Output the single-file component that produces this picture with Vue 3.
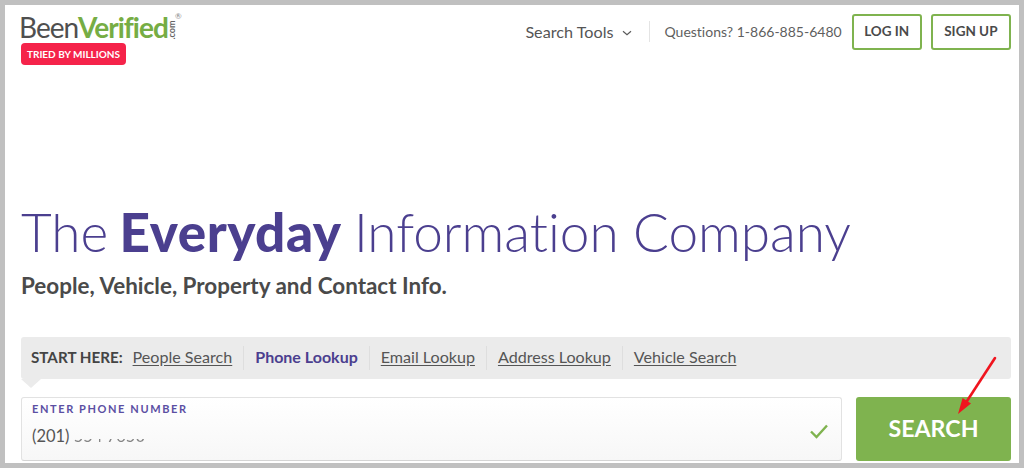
<script setup>
const tabs = [
  { label: 'People Search', active: false },
  { label: 'Phone Lookup', active: true },
  { label: 'Email Lookup', active: false },
  { label: 'Address Lookup', active: false },
  { label: 'Vehicle Search', active: false },
]
</script>

<template>
  <div class="page">
    <div class="frame">
      <header class="header">
        <div class="brand">
          <div class="logo">
            <span class="been">Been</span><span class="verified">Verified</span>
            <span class="com">.com</span>
            <span class="reg">®</span>
          </div>
          <span class="badge">TRIED BY MILLIONS</span>
        </div>
        <nav class="nav">
          <span class="tools">Search Tools</span>
          <svg class="chev" width="10" height="6" viewBox="0 0 10 6"><path d="M1 1.2 5 4.6 9 1.2" fill="none" stroke="#5a5a5a" stroke-width="1.2"/></svg>
          <span class="divider"></span>
          <span class="phone">Questions? 1-866-885-6480</span>
          <a class="outline login">LOG IN</a>
          <a class="outline signup">SIGN UP</a>
        </nav>
      </header>

      <section class="hero">
        <h1 class="title">The <b>Everyday</b> Information Company</h1>
        <p class="sub">People, Vehicle, Property and Contact Info.</p>
      </section>

      <section class="search">
        <div class="tabs">
          <span class="start">START HERE:</span>
          <template v-for="(t, i) in tabs" :key="t.label">
            <span v-if="i" class="sep"></span>
            <a class="tab" :class="{ active: t.active }">{{ t.label }}</a>
          </template>
        </div>
        <div class="notch"></div>
        <div class="row">
          <div class="field">
            <div class="field-text">
              <label class="label">ENTER PHONE NUMBER</label>
              <div class="value">(201) <span class="blur">554 7650</span></div>
            </div>
            <svg class="check" width="20" height="16" viewBox="0 0 20 16"><path d="M2 8.5 7.5 14 18 2.5" fill="none" stroke="#7fb34f" stroke-width="2.4"/></svg>
          </div>
          <button class="go">SEARCH</button>
        </div>
        <svg class="arrow" width="50" height="70" viewBox="0 0 50 70">
          <path d="M45 8 17 51" stroke="#f0141e" stroke-width="2.6" fill="none" stroke-linecap="round"/>
          <path d="M8 64 12.6 48 21 53.5Z" fill="#f0141e"/>
        </svg>
      </section>
    </div>
  </div>
</template>

<style>
html, body { margin: 0; padding: 0; background: #c0c0c0; }
</style>

<style scoped>
.page {
  width: 1024px;
  height: 468px;
  box-sizing: border-box;
  padding: 5px;
  background: #c0c0c0;
  font-family: Lato, "Open Sans", sans-serif;
  font-variant-ligatures: none;
  overflow: hidden;
}
.frame {
  height: 458px;
  background: #fff;
  box-sizing: border-box;
  padding: 0 8px 3px 16px;
  display: flex;
  flex-direction: column;
  overflow: hidden;
}
.header {
  display: flex;
  justify-content: space-between;
  align-items: flex-start;
  height: 60px;
}
.brand { padding-top: 6px; }
.logo {
  position: relative;
  height: 32px;
  width: 160px;
  margin-left: -2px;
  line-height: 32px;
  font-size: 28px;
  letter-spacing: -1px;
  white-space: nowrap;
}
.been { color: #4f4f4f; font-weight: 400; }
.verified { color: #76ad44; font-weight: 700; }
.com {
  position: absolute;
  left: 143px;
  top: 14px;
  font-size: 9px;
  font-weight: 700;
  letter-spacing: 0;
  line-height: 10px;
  color: #666;
  transform: rotate(-90deg);
}
.reg {
  position: absolute;
  left: 156px;
  top: 0;
  font-size: 8px;
  line-height: 10px;
  letter-spacing: 0;
  color: #888;
}
.badge {
  display: block;
  width: 105px;
  height: 22px;
  line-height: 22px;
  border-radius: 4px;
  background: #f5234a;
  color: #fff;
  font-size: 10px;
  font-weight: 700;
  text-align: center;
  white-space: nowrap;
}
.nav {
  display: flex;
  align-items: center;
  padding-top: 9px;
  height: 35px;
}
.tools { font-size: 16.2px; color: #555; margin: -1px 9px 0 0; }
.chev { margin-top: 3px; }
.divider { width: 1px; height: 21px; background: #e4e4e4; margin: 0 14px 0 17px; }
.phone { font-size: 14px; color: #5f5f5f; margin-right: 10px; }
.outline {
  box-sizing: border-box;
  height: 36px;
  line-height: 31px;
  padding: 0 11px;
  border: 2px solid #7fb34f;
  border-radius: 3px;
  color: #4a4a4a;
  font-size: 13.5px;
  font-weight: 700;
  white-space: nowrap;
}
.signup { padding: 0 11.5px; }
.login { margin-right: 9px; padding: 0 10.5px; }
.hero { margin-top: 134px; }
.title {
  margin: 0;
  font-size: 53.1px;
  line-height: 66px;
  font-weight: 300;
  color: #4b3f8f;
  white-space: nowrap;
}
.title b { font-weight: 900; letter-spacing: .5px; margin: 0 -2px 0 -3px; }
.sub {
  margin: 6px 0 0;
  font-size: 22.45px;
  line-height: 30px;
  font-weight: 700;
  color: #4a4a4a;
}
.search { position: relative; margin-top: 36px; }
.tabs {
  display: flex;
  align-items: center;
  height: 42px;
  box-sizing: border-box;
  padding: 0 0 3px 10px;
  background: #ebebeb;
  border-radius: 3px;
}
.start { font-size: 15.2px; font-weight: 700; color: #444; margin-right: 10px; }
.tab {
  font-size: 16.1px;
  color: #555;
  text-decoration: underline;
  text-underline-offset: 2px;
  white-space: nowrap;
}
.tab.active { color: #4b3f8f; font-weight: 700; text-decoration: none; font-size: 16px; }
.sep { width: 1px; height: 24px; background: #dedede; margin: 3px 11px 0; }
.notch {
  width: 0;
  height: 0;
  border-top: 9px solid #ebebeb;
  border-left: 10px solid transparent;
  border-right: 10px solid transparent;
}
.row { display: flex; gap: 14px; margin-top: 9px; }
.field {
  flex: 1;
  box-sizing: border-box;
  height: 64px;
  display: flex;
  align-items: center;
  justify-content: space-between;
  padding: 0 12px 0 10px;
  border: 1px solid #e2e2e2;
  border-bottom-color: #d4d4d4;
  border-radius: 3px;
  background: linear-gradient(#ffffff, #f7f7f7);
}
.field-text { align-self: flex-start; }
.label {
  display: block;
  margin-top: 4px;
  font-size: 11px;
  line-height: 14px;
  letter-spacing: 1.6px;
  font-weight: 700;
  color: #5b4fa3;
}
.value { margin-top: 9px; font-size: 16.5px; line-height: 22px; color: #555; }
.blur { display: inline-block; filter: blur(0.5px); opacity: .7; clip-path: inset(64% 0 0 0); }
.check { margin-top: 3px; }
.go {
  width: 155px;
  height: 64px;
  border: 0;
  border-radius: 3px;
  background: #7fb34f;
  color: #fff;
  font-family: inherit;
  font-size: 23.2px;
  font-weight: 700;
  padding: 0 0 3px;
}
.arrow { position: absolute; left: 929px; top: 13px; }
</style>
